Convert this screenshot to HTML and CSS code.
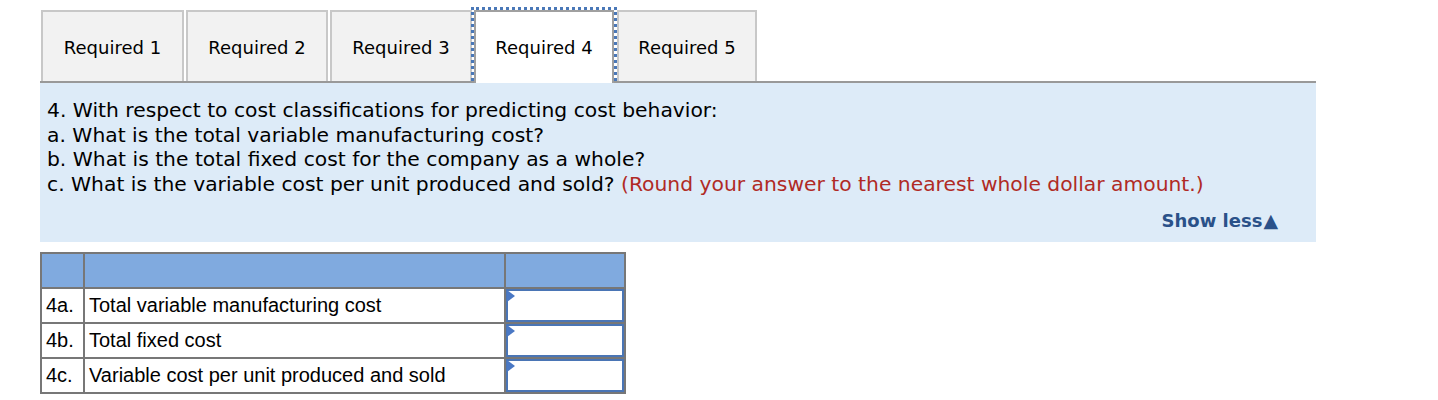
FILE: index.html
```html
<!DOCTYPE html>
<html>
<head>
<meta charset="utf-8">
<link rel="stylesheet" href="styles.css">
</head>
<body>
<div class="wrap">
  <div class="tabs">
    <div class="tab first">Required 1</div>
    <div class="tab">Required 2</div>
    <div class="tab">Required 3</div>
    <div class="tab active">Required 4</div>
    <div class="tab last">Required 5</div>
  </div>
  <div class="panel">
    <div class="q">
      <div>4. With respect to cost classifications for predicting cost behavior:</div>
      <div>a. What is the total variable manufacturing cost?</div>
      <div>b. What is the total fixed cost for the company as a whole?</div>
      <div>c. What is the variable cost per unit produced and sold? <span class="red">(Round your answer to the nearest whole dollar amount.)</span></div>
    </div>
    <div class="showless">Show less<span class="tri">&#9650;</span></div>
  </div>
  <table class="grid">
    <tr class="head"><td class="c1"></td><td class="c2"></td><td class="c3"></td></tr>
    <tr><td class="c1">4a.</td><td class="c2">Total variable manufacturing cost</td><td class="c3 inp"><span class="flag"></span></td></tr>
    <tr><td class="c1">4b.</td><td class="c2">Total fixed cost</td><td class="c3 inp"><span class="flag"></span></td></tr>
    <tr><td class="c1">4c.</td><td class="c2">Variable cost per unit produced and sold</td><td class="c3 inp"><span class="flag"></span></td></tr>
  </table>
</div>
</body>
</html>
```
FILE: styles.css
```css
html, body { margin: 0; padding: 0; background: #fff; }
body { font-family: "DejaVu Sans", Verdana, sans-serif; color: #000; }
.wrap { padding: 10px 0 0 40px; width: 1276px; }
.tabs { display: flex; gap: 2px; padding-left: 1px; border-bottom: 2px solid #999; height: 71px; }
.tab {
  box-sizing: border-box;
  height: 71px;
  width: 142px;
  background: #f2f2f2;
  border: 2px solid #c8c8c8;
  border-bottom: none;
  display: flex; align-items: center; justify-content: center;
  font-size: 18px;
  padding-top: 2px;
}
.tab.first { width: 143px; }
.tab.last { width: 140px; }
.tab.active {
  background: #fff;
  border: 2px solid #a0a0a0;
  border-bottom: none;
  outline: 3px dotted #4a78b8;
  outline-offset: 0;
  position: relative;
  height: 73px;
  width: 140px;
  margin-right: 1px;
  padding-top: 0;
}
.panel {
  background: #ddebf8;
  height: 159px;
  box-sizing: border-box;
  padding: 15px 0 0 7px;
  position: relative;
}
.q { font-size: 20.3px; line-height: 24.5px; }
.red { color: #b02a25; }
.showless {
  position: absolute; right: 38px; bottom: 11px;
  color: #2a5189; font-weight: bold; font-size: 18px;
  display: flex; align-items: center;
}
.tri { font-size: 19px; margin-left: 1px; line-height: 1; }
.grid {
  margin-top: 10px;
  border-collapse: collapse;
  font-family: "Liberation Sans", Arial, sans-serif;
  font-size: 20px;
  border: 2px solid #777;
}
.grid td { border: 2px solid #777; padding: 0 4px; height: 35px; box-sizing: border-box; }
.grid .head td { background: #80aadf; height: 35px; }
.c1 { width: 43px; }
.c2 { width: 421px; }
.c3 { width: 120px; }
.grid td.inp { position: relative; padding: 0; border-color: #777; }
.grid td.inp::after {
  content: ""; position: absolute; left: 0; top: 0; right: 0; bottom: 0;
  border: 2px solid #4a75b5;
}
.flag {
  position: absolute; left: 1px; top: 1px;
  width: 0; height: 0;
  border-top: 6px solid transparent;
  border-bottom: 6px solid transparent;
  border-left: 8px solid #4a78c4;
  z-index: 1;
}
```
